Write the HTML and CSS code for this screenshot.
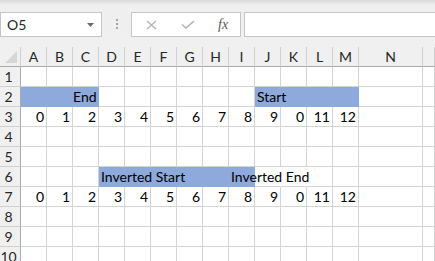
FILE: index.html
```html
<!DOCTYPE html>
<html>
<head>
    <meta charset="UTF-8">
    <title>Sheet1</title>
    <link rel="stylesheet" href="styles.css">
</head>
<body>
<div class="toolbar">
    <div class="name-box">
        <span>O5</span>
        <svg class="caret" width="7" height="4" viewBox="0 0 7 4"><path d="M0 0h7L3.5 4z" fill="#6b6b6b"/></svg>
    </div>
    <div class="grip"><i></i><i></i><i></i></div>
    <div class="fx-box">
        <svg width="11" height="10" viewBox="0 0 11 10"><path d="M1 1l9 8M10 1l-9 8" stroke="#b4b4b4" stroke-width="1.4" fill="none"/></svg>
        <svg width="14" height="9" viewBox="0 0 14 9"><path d="M1 4.5l4 3.5l8-7" stroke="#b4b4b4" stroke-width="1.6" fill="none"/></svg>
        <span class="fx">fx</span>
    </div>
    <div class="formula"></div>
</div>

<table class="sheet">
    <colgroup>
        <col class="col-head">
        <col class="col"><col class="col"><col class="col"><col class="col"><col class="col">
        <col class="col"><col class="col"><col class="col"><col class="col"><col class="col">
        <col class="col"><col class="col"><col class="col">
        <col class="col-wide">
        <col>
    </colgroup>
    <thead>
    <tr>
        <th class="corner"><span class="select-all"></span></th>
        <th>A</th><th>B</th><th>C</th><th>D</th><th>E</th><th>F</th><th>G</th>
        <th>H</th><th>I</th><th>J</th><th>K</th><th>L</th><th>M</th><th>N</th><th></th>
    </tr>
    </thead>
    <tbody>
    <tr>
        <th>1</th>
        <td></td><td></td><td></td><td></td><td></td><td></td><td></td>
        <td></td><td></td><td></td><td></td><td></td><td></td><td></td><td></td>
    </tr>
    <tr>
        <th>2</th>
        <td class="fill"></td><td class="fill"></td><td class="fill num">End</td>
        <td></td><td></td><td></td><td></td><td></td><td></td>
        <td class="fill text">Start</td><td class="fill"></td><td class="fill"></td><td class="fill"></td>
        <td></td><td></td>
    </tr>
    <tr>
        <th>3</th>
        <td class="num">0</td><td class="num">1</td><td class="num">2</td><td class="num">3</td>
        <td class="num">4</td><td class="num">5</td><td class="num">6</td><td class="num">7</td>
        <td class="num">8</td><td class="num">9</td><td class="num">0</td><td class="num">11</td>
        <td class="num">12</td><td></td><td></td>
    </tr>
    <tr>
        <th>4</th>
        <td></td><td></td><td></td><td></td><td></td><td></td><td></td>
        <td></td><td></td><td></td><td></td><td></td><td></td><td></td><td></td>
    </tr>
    <tr>
        <th>5</th>
        <td></td><td></td><td></td><td></td><td></td><td></td><td></td>
        <td></td><td></td><td></td><td></td><td></td><td></td><td></td><td></td>
    </tr>
    <tr>
        <th>6</th>
        <td></td><td></td><td></td>
        <td class="fill text">Inverted Start</td><td class="fill"></td><td class="fill"></td>
        <td class="fill"></td><td class="fill"></td><td class="fill text">Inverted End</td>
        <td class="open"></td><td class="open"></td><td></td><td></td><td></td><td></td>
    </tr>
    <tr>
        <th>7</th>
        <td class="num">0</td><td class="num">1</td><td class="num">2</td><td class="num">3</td>
        <td class="num">4</td><td class="num">5</td><td class="num">6</td><td class="num">7</td>
        <td class="num">8</td><td class="num">9</td><td class="num">0</td><td class="num">11</td>
        <td class="num">12</td><td></td><td></td>
    </tr>
    <tr>
        <th>8</th>
        <td></td><td></td><td></td><td></td><td></td><td></td><td></td>
        <td></td><td></td><td></td><td></td><td></td><td></td><td></td><td></td>
    </tr>
    <tr>
        <th>9</th>
        <td></td><td></td><td></td><td></td><td></td><td></td><td></td>
        <td></td><td></td><td></td><td></td><td></td><td></td><td></td><td></td>
    </tr>
    <tr>
        <th>10</th>
        <td></td><td></td><td></td><td></td><td></td><td></td><td></td>
        <td></td><td></td><td></td><td></td><td></td><td></td><td></td><td></td>
    </tr>
    </tbody>
</table>
</body>
</html>
```

FILE: styles.css
```css
html, body {
    margin: 0;
    overflow: hidden;
}

body {
    font-family: Lato, "Liberation Sans", sans-serif;
    font-size: 14px;
    color: #000000;
    background-color: #ffffff;
}

/* formula bar */

.toolbar {
    display: flex;
    align-items: flex-start;
    height: 47px;
    padding-top: 12px;
    box-sizing: border-box;
    background: linear-gradient(#d9d9d9 0, #efefef 5px, #f0f0f0 100%);
}

.name-box {
    display: flex;
    align-items: center;
    justify-content: space-between;
    width: 102px;
    height: 25px;
    padding: 0 7px 0 6px;
    box-sizing: border-box;
    border: 1px solid #c6c6c6;
    background-color: #ffffff;
    color: #262626;
}

.grip {
    display: flex;
    flex-flow: column;
    gap: 2px;
    margin: 7px 13px 0 14px;
}

.grip i {
    width: 2px;
    height: 2px;
    background-color: #a6a6a6;
}

.fx-box {
    display: flex;
    align-items: center;
    width: 110px;
    height: 25px;
    padding-left: 14px;
    box-sizing: border-box;
    border: 1px solid #c6c6c6;
    background-color: #ffffff;
}

.fx-box svg + svg {
    margin-left: 24px;
}

.fx {
    margin-left: 23px;
    font-family: "Liberation Serif", serif;
    font-style: italic;
    font-size: 14px;
    color: #595959;
}

.formula {
    flex: 1;
    height: 25px;
    margin-left: 3px;
    box-sizing: border-box;
    border: 1px solid #c6c6c6;
    border-right: none;
    background-color: #ffffff;
}

/* grid */

.sheet {
    table-layout: fixed;
    width: 100%;
    border-collapse: separate;
    border-spacing: 0;
}

.col-head {
    width: 21px;
}

.col {
    width: 26px;
}

.col-wide {
    width: 64px;
}

.sheet th,
.sheet td {
    height: 20px;
    padding: 0;
    box-sizing: border-box;
    white-space: nowrap;
    overflow: visible;
    line-height: 19px;
}

.sheet thead th {
    font-weight: normal;
    color: #262626;
    text-align: center;
    background-color: #f0f0f0;
    border-right: 1px solid #d0d0d0;
    border-bottom: 1px solid #ababab;
}

.sheet tbody th {
    font-weight: normal;
    color: #262626;
    text-align: center;
    padding-right: 3px;
    background-color: #f0f0f0;
    border-right: 1px solid #ababab;
    border-bottom: 1px solid #d0d0d0;
}

.sheet .corner {
    position: relative;
}

.select-all {
    position: absolute;
    right: 3px;
    bottom: 3px;
    width: 0;
    height: 0;
    border-left: 12px solid transparent;
    border-bottom: 12px solid #d6d6d6;
}

.sheet td {
    border-right: 1px solid #d4d4d4;
    border-bottom: 1px solid #d4d4d4;
}

.sheet td.num {
    text-align: right;
    padding-right: 2px;
}

.sheet td.text {
    text-align: left;
    padding-left: 2px;
}

.sheet td.fill {
    background-color: #8ea9db;
    border-color: #8ea9db;
}

.sheet td.open {
    border-right-color: transparent;
}
```
